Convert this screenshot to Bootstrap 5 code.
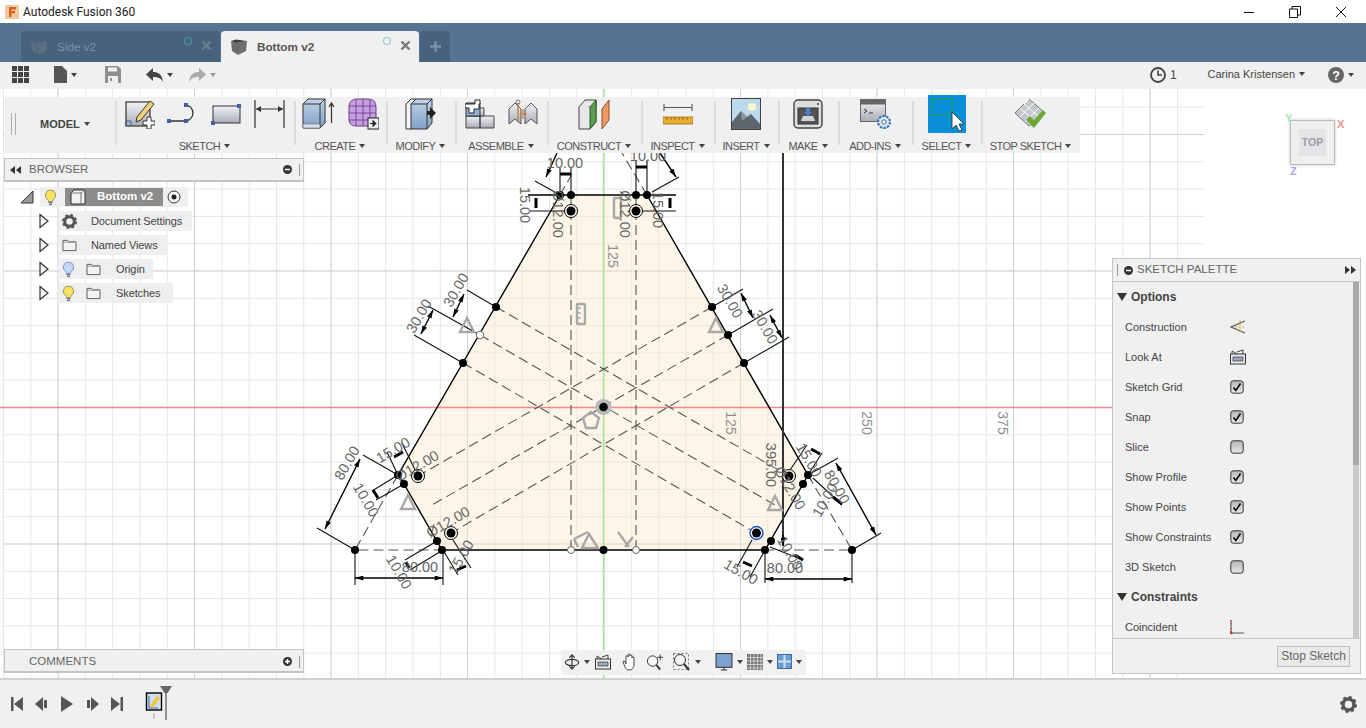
<!DOCTYPE html>
<html lang="en">
<head>
<meta charset="UTF-8">
<title>Autodesk Fusion 360</title>
<link href="https://cdn.jsdelivr.net/npm/bootstrap@5.3.2/dist/css/bootstrap.min.css" rel="stylesheet">
<style>
body { font-family: "Liberation Sans", Arial, sans-serif; font-size: 12px; color: #444; background: #fff; height: 728px; width: 1366px; }
.dropdown-toggle::after { border-top-width: 4px; border-left-width: 3.5px; border-right-width: 3.5px; margin-left: 4px; vertical-align: 2px; color: #444; }

/* title + tabs */
.title-strip { height: 23px; background: #fff; padding-left: 5px; font-family: Roboto, sans-serif; color: #222; }
.title-strip .win-name { margin-left: 4px; font-size: 12px; }
.win-btns { margin-left: auto; margin-right: 19px; gap: 34px; }
.tab-strip { height: 39px; background: #56738f; padding-left: 21px; gap: 1px; }
.doc-tab { height: 31px; width: 199px; border-radius: 4px 4px 0 0; font-size: 11.7px; }
.doc-tab .tab-ico { margin-left: 9px; }
.doc-tab .tab-name { margin-left: 9px; }
.doc-tab .tab-dot { position: absolute; top: 5px; right: 27px; }
.doc-tab .tab-x { position: absolute; top: 9px; right: 8px; }
.doc-off { background: #47627d; color: #7f93a6; }
.doc-on { background: #f0f0f0; color: #555; font-weight: 700; width: 198px; }
.doc-add { height: 31px; width: 30px; background: #47627d; border-radius: 4px 4px 0 0; }

/* app bar */
.app-strip { height: 27px; background: #f0f0f0; padding-left: 12px; padding-bottom: 2px; }
.ap-file { margin-left: 25px; }
.ap-save { margin-left: 28px; }
.ap-undo { margin-left: 25px; }
.ap-redo { margin-left: 16px; }
.ap-user { margin-left: 31px; color: #444; font-size: 11px; }
.ap-help { margin-left: 23px; margin-right: 12px; }
.ap-num { margin-left: 4px; }
.light-caret.dropdown-toggle::after { color: #999; }

/* canvas */
.stage { height: 589px; background: #fff; }
.stage-art { position: absolute; left: 0; top: 0; }
.dim-txt { font: 14.5px "Liberation Sans", sans-serif; fill: #666; text-anchor: middle; dominant-baseline: central; }
.grid-num { font: 14px "Liberation Sans", sans-serif; fill: #8f8f8f; text-anchor: middle; dominant-baseline: central; }
.ln { stroke: #000; stroke-width: 1.4; fill: none; }
.dsh { stroke: #555; stroke-width: 1.1; stroke-dasharray: 10 5; fill: none; }
.ex { stroke: #111; stroke-width: 1.1; fill: none; }
.thk { stroke: #000; stroke-width: 3; fill: none; }
.cns { stroke: #a8a8a8; stroke-width: 2.4; fill: none; }

/* toolbar */
.tool-panel { position: absolute; left: 5px; top: 8px; width: 1075px; height: 56px; background: #f0f0f0; }
.tool-grp { height: 56px; position: relative; }
.tool-grp + .tool-grp::before { content: ""; position: absolute; left: 0; top: 4px; bottom: 8px; width: 1.5px; background: #dcdcdc; }
.tool-ico { height: 34px; margin-bottom: 9px; gap: 12px; }
.tool-lbl { font-size: 11px; letter-spacing: -.5px; color: #555; line-height: 13px; white-space: nowrap; }
.grp-model { width: 110px; padding-left: 6px; padding-bottom: 2px; }
.grp-model .grip { width: 5px; height: 22px; border-left: 1px solid #aaa; border-right: 1px solid #aaa; margin-right: 24px; }
.model-lbl { font-weight: 700; font-size: 11px; color: #444; }
.w-sketch { width: 179px; } .w-create { width: 92px; } .w-modify { width: 69px; }
.w-assemble { width: 92px; } .w-construct { width: 94px; } .w-inspect { width: 73px; }
.w-insert { width: 64px; } .w-make { width: 60px; } .w-addins { width: 74px; }
.w-select { width: 69px; } .w-stop { width: 99px; }
.sel-ico { width: 38px; height: 38px; background: #0a90d8; flex-shrink: 0; }

/* side panels */
.side-panel { position: absolute; left: 4px; width: 300px; height: 24px; background: #f0f0f0; border: 1px solid #c4c4c4; border-bottom-width: 2px; font-size: 11.5px; color: #666; }
.side-panel .back-ico { margin-left: 5px; margin-right: 8px; }
.browser-head { top: 69px; }
.comments-head { top: 560px; padding-left: 24px; padding-top: 2px; }
.grip-v { width: 3px; height: 12px; border-left: 1px solid #999; margin-left: 7px; margin-right: 1px; }
.tree-box { position: absolute; left: 0; top: 96px; width: 300px; font-size: 11px; letter-spacing: -.1px; color: #444; }
.tree-row { height: 24px; }
.tree-fill { height: 20px; background: rgba(238,238,238,.92); }
.tree-arrow { width: 12px; margin-left: 38px; margin-right: 8px; }
.tr-root { margin-left: 20px; width: 14px; margin-right: 6px; }
.fill-root { width: 148px; }
.root-name { width: 98px; height: 18px; background: #8c8c8c; color: #fff; font-weight: 700; font-size: 11.5px; letter-spacing: 0; margin-left: 8px; padding-left: 5px; }
.root-text { margin-left: 11px; }
.fill-doc { width: 134px; } .fill-view { width: 110px; } .fill-org { width: 95px; } .fill-skt { width: 115px; }
.tree-lbl-a { margin-left: 14px; }
.tree-lbl-b { margin-left: 15px; }
.tree-fold { margin-left: 11px; }

/* palette */
.pal-panel { position: absolute; left: 1112px; top: 169px; width: 249px; height: 416px; background: #f0f0f0; border: 1px solid #c6c6c6; color: #444; }
.pal-head { height: 23px; border-bottom: 1px solid #c6c6c6; font-size: 11.5px; color: #666; flex-shrink: 0; }
.pal-body { height: 356px; overflow: hidden; flex-shrink: 0; }
.pal-rows { width: 240px; font-size: 11px; }
.pal-row { height: 30px; padding-left: 12px; }
.pal-row > span:first-child { width: 105px; padding-top: 1px; }
.pal-sec { height: 30px; padding-left: 4px; font-weight: 700; font-size: 12px; gap: 4px; }
.pal-scroll { width: 6px; margin-left: auto; margin-right: 1px; background: #c9c9c9; }
.pal-thumb { height: 183px; background: #a9a9a9; }
.pal-foot { height: 35px; border-top: 1px solid #c6c6c6; padding-right: 10px; }
.stop-btn { width: 73px; height: 21px; padding: 0; border-radius: 0; border: 1px solid #bdbdbd; background: #eaeaea; color: #666; font-size: 12px; line-height: 18px; }

/* nav bar + view cube */
.nav-panel { position: absolute; left: 561px; top: 561px; width: 245px; height: 25px; background: rgba(240,240,240,.92); padding-left: 3px; padding-bottom: 2px; }
.nav-panel > * { flex-shrink: 0; }
.nv-4 { margin-left: 4px; } .nv-5 { margin-left: 5px; } .nv-9 { margin-left: 9px; } .nv-10 { margin-left: 10px; } .nv-14 { margin-left: 14px; }
.cube-box { position: absolute; left: 1290px; top: 31px; width: 45px; height: 45px; background: #efefef; border: 1px solid #bbb; box-shadow: 0 0 3px rgba(0,0,0,.25); }
.cube-top { width: 27px; height: 27px; background: #e4e4e7; font-size: 10.5px; font-weight: 700; color: #9b9ba3; }
.cube-axis { position: absolute; font-size: 11px; font-weight: 700; line-height: 12px; }
.ax-x { left: 1337px; top: 29px; color: #f08f8f; }
.ax-y { left: 1285px; top: 23px; color: #a9e6a9; }
.ax-z { left: 1290px; top: 76px; color: #a6a6ee; }

/* timeline */
.time-strip { height: 50px; background: #f0f0f0; border-top: 2px solid #d0d0d0; padding-left: 10px; gap: 11px; }
.time-mark { margin-left: 10px; margin-top: -2px; }
.time-gear { margin-left: auto; margin-right: 9px; }
</style>
</head>
<body class="d-flex flex-column overflow-hidden">

<svg width="0" height="0" class="position-absolute">
  <defs>
    <linearGradient id="gBlue" x1="0" y1="0" x2="0" y2="1"><stop offset="0" stop-color="#c3d5ea"/><stop offset="1" stop-color="#7f9fc6"/></linearGradient>
    <linearGradient id="gGrey" x1="0" y1="0" x2="0" y2="1"><stop offset="0" stop-color="#f2f2f4"/><stop offset="1" stop-color="#a9adb8"/></linearGradient>
    <linearGradient id="gChk" x1="0" y1="0" x2="0" y2="1"><stop offset="0" stop-color="#b5b5b5"/><stop offset="1" stop-color="#e8e8e8"/></linearGradient>
    <marker id="arw" viewBox="0 0 10 6" refX="10" refY="3" markerWidth="9" markerHeight="5" markerUnits="userSpaceOnUse" orient="auto-start-reverse"><path d="M0 0L10 3L0 6Z" fill="#000"/></marker>
    <symbol id="bulbY" viewBox="0 0 14 18"><path d="M7 1a5.500 5.500 0 0 0-3.200 10c.7.6 1 1.400 1 2.400h4.400c0-1 .3-1.800 1-2.400A5.500 5.500 0 0 0 7 1z" fill="#f7e35e" stroke="#8f8f6a"/><path d="M5 14.500h4M5.500 16.500h3" stroke="#6a6f8c" stroke-width="1.500"/></symbol>
    <symbol id="bulbB" viewBox="0 0 14 18"><path d="M7 1a5.500 5.500 0 0 0-3.200 10c.7.6 1 1.400 1 2.400h4.400c0-1 .3-1.800 1-2.400A5.500 5.500 0 0 0 7 1z" fill="#c3d6f3" stroke="#7f8fb0"/><path d="M5 14.500h4M5.500 16.500h3" stroke="#6a6f8c" stroke-width="1.500"/></symbol>
    <symbol id="folder" viewBox="0 0 16 14"><path d="M1 12.500V1.500h5l1.500 1.500h7.500v9.500z" fill="#f4f4f4" stroke="#555"/><path d="M1 3.500h14" stroke="#999"/></symbol>
    <symbol id="treeArr" viewBox="0 0 12 16"><path d="M2 1.500L10 8L2 14.500z" fill="#f7f7f7" stroke="#333" stroke-width="1.200"/></symbol>
    <symbol id="chkOn" viewBox="0 0 14 14"><rect x=".8" y=".8" width="12.400" height="12.400" rx="2.500" fill="url(#gChk)" stroke="#333"/><path d="M3.500 7.500l2.300 3L10.500 3.500" fill="none" stroke="#000" stroke-width="1.500"/></symbol>
    <symbol id="chkOff" viewBox="0 0 14 14"><rect x=".8" y=".8" width="12.400" height="12.400" rx="2.500" fill="url(#gChk)" stroke="#333"/></symbol>
  </defs>
</svg>

<!-- window title -->
<div class="title-strip d-flex align-items-center flex-shrink-0">
  <svg width="14" height="16" viewBox="0 0 14 16"><rect x="0" y="1" width="14" height="14" rx="1" fill="#f3c9a0"/><path d="M4 3h7v2.500H6.500V7H10v2.200H6.500V13H4z" fill="#d9611e"/></svg>
  <span class="win-name">Autodesk Fusion 360</span>
  <div class="win-btns d-flex align-items-center">
    <svg width="12" height="12" viewBox="0 0 12 12"><path d="M1 6.500h10" stroke="#111"/></svg>
    <svg width="12" height="12" viewBox="0 0 12 12"><path d="M.5 3h8v8.500h-8zM3 3V.5h8.500V9H8.500" fill="none" stroke="#111"/></svg>
    <svg width="12" height="12" viewBox="0 0 12 12"><path d="M1 1l10 10M11 1L1 11" stroke="#111"/></svg>
  </div>
</div>

<!-- document tabs -->
<div class="tab-strip d-flex align-items-end flex-shrink-0">
  <div class="doc-tab doc-off position-relative d-flex align-items-center">
    <svg class="tab-ico" width="18" height="18" viewBox="0 0 18 18"><path d="M1 3l5 2 11-2-1 10-8 4-6-4z" fill="#5c6f81"/><path d="M6 5l2 12" stroke="#47627d"/></svg>
    <span class="tab-name">Side v2</span>
    <svg class="tab-dot" width="10" height="10" viewBox="0 0 10 10"><circle cx="5" cy="5" r="3.500" fill="none" stroke="#3d9c9c" stroke-width="1.200"/></svg>
    <svg class="tab-x" width="11" height="11" viewBox="0 0 11 11"><path d="M1.500 1.500l8 8M9.500 1.500l-8 8" stroke="#69808f" stroke-width="2.400"/></svg>
  </div>
  <div class="doc-tab doc-on position-relative d-flex align-items-center">
    <svg class="tab-ico" width="18" height="18" viewBox="0 0 18 18"><path d="M1 3l5 2 11-2-1 10-8 4-6-4z" fill="#6d6d6d"/><path d="M1 3l5-1.500 11 1.500-11 2z" fill="#3f3f3f"/></svg>
    <span class="tab-name">Bottom v2</span>
    <svg class="tab-dot" width="10" height="10" viewBox="0 0 10 10"><circle cx="5" cy="5" r="3.500" fill="none" stroke="#8fd0c8" stroke-width="1.200"/></svg>
    <svg class="tab-x" width="11" height="11" viewBox="0 0 11 11"><path d="M1.500 1.500l8 8M9.500 1.500l-8 8" stroke="#777" stroke-width="2.400"/></svg>
  </div>
  <div class="doc-add d-flex align-items-center justify-content-center">
    <svg width="13" height="13" viewBox="0 0 13 13"><path d="M6.500 1v11M1 6.500h11" stroke="#7890a6" stroke-width="2.400"/></svg>
  </div>
</div>

<!-- application bar -->
<div class="app-strip d-flex align-items-center flex-shrink-0">
  <svg width="17" height="17" viewBox="0 0 17 17"><path d="M0 0h5v5H0zM6 0h5v5H6zM12 0h5v5h-5zM0 6h5v5H0zM6 6h5v5H6zM12 6h5v5h-5zM0 12h5v5H0zM6 12h5v5H6zM12 12h5v5h-5z" fill="#444"/></svg>
  <span class="ap-file dropdown-toggle d-flex align-items-center"><svg width="13" height="17" viewBox="0 0 13 17"><path d="M0 0h8l5 5v12H0z" fill="#555"/></svg></span>
  <svg class="ap-save" width="16" height="17" viewBox="0 0 16 17"><path d="M0 0h13l3 3v14H0z" fill="#8f8f8f"/><path d="M3 1.500h9v4H3z" fill="#f0f0f0"/><path d="M3 10h10v7H3z" fill="#f0f0f0"/><path d="M5 12h2v3H5z" fill="#8f8f8f"/></svg>
  <span class="ap-undo dropdown-toggle d-flex align-items-center"><svg width="17" height="14" viewBox="0 0 17 14"><path d="M7 0v4c5 0 9 2 10 10-2-4-5-5-10-5v4L0 6.500z" fill="#444"/></svg></span>
  <span class="ap-redo dropdown-toggle light-caret d-flex align-items-center"><svg width="17" height="14" viewBox="0 0 17 14"><path d="M10 0v4C5 4 1 6 0 14c2-4 5-5 10-5v4l7-6.500z" fill="#aaa"/></svg></span>
  <svg class="ms-auto" width="16" height="16" viewBox="0 0 16 16"><circle cx="8" cy="8" r="7" fill="none" stroke="#444" stroke-width="1.800"/><path d="M8 3.500V8h4" fill="none" stroke="#444" stroke-width="1.600"/></svg>
  <span class="ap-num">1</span>
  <span class="ap-user dropdown-toggle">Carina Kristensen</span>
  <span class="ap-help dropdown-toggle d-flex align-items-center"><svg width="16" height="16" viewBox="0 0 16 16"><circle cx="8" cy="8" r="8" fill="#666"/><text x="8" y="12.500" text-anchor="middle" font-family="Liberation Sans" font-size="12.500" font-weight="700" fill="#fff">?</text></svg></span>
</div>

<!-- canvas -->
<main class="stage position-relative flex-shrink-0 overflow-hidden">
  <svg class="stage-art" width="1366" height="589" viewBox="0 89 1366 589">
    <defs>
      <pattern id="gMinor" patternUnits="userSpaceOnUse" x="3" y="24.800" width="27.300" height="27.300"><path d="M.5 0V27.300M0 .5H27.300" stroke="#e6e6e6" fill="none"/></pattern>
      <pattern id="gMajor" patternUnits="userSpaceOnUse" x="57.500" y="134" width="136.500" height="136.500"><path d="M.5 0V136.500M0 .5H136.500" stroke="#d2d2d2" fill="none"/></pattern>
    </defs>
    <rect x="3" y="89" width="1201" height="589" fill="url(#gMinor)"/>
    <rect x="3" y="89" width="1201" height="589" fill="url(#gMajor)"/>

    <!-- profile -->
    <path d="M560 195H647L808 475L803 484L765 550H443L404 484L398 475Z" fill="#fbe6c8" fill-opacity=".42"/>
    <path d="M0 407.500H1112" stroke="#f08a8a" stroke-width="1.500"/>
    <path d="M603.500 89V678" stroke="#a5e89a" stroke-width="1.500"/>

    <!-- construction lines -->
    <path class="dsh" d="M496 307L789 476M480 335L775 505M463 363L756 533M712 307L418 476M728 335L432 505M744 363L451 533"/>
    <path class="dsh" d="M571 195V550M636 195V550"/>
    <path class="dsh" d="M398 475L355 550L443 550M808 475L852 550L765 550"/>
    <path class="dsh" d="M560 195L572 174M647 195L622 153"/>

    <!-- outer edges -->
    <path class="ln" d="M560 195H676M528 195H560M560 195L398 475L404 484L442 550H765L803 484L808 475L647 195"/>
    <path d="M783 153V545" stroke="#333" stroke-width="2"/>
    <path d="M783 535V546" stroke="#000" stroke-width="1.500" marker-end="url(#arw)"/>

    <!-- dimensions: top -->
    <path class="ex" d="M560 195V168M571 195V168M530 211H571M636 195V160M647 195V160M636 211H676M535 181L560 195M652 192L679 177"/>
    <path class="thk" d="M560 174H571M536 198V208M636 167H647M670 198V208"/>
    <path class="ln" d="M546 177L557 153" marker-start="url(#arw)"/>
    <path class="ln" d="M676 177L660 153" marker-start="url(#arw)"/>

    <!-- dimensions: upper sides -->
    <path class="ex" d="M496 307L467 290M480 335L428 306M463 363L414 335M712 307L743 289M728 335L773 309M744 363L789 337"/>
    <path class="ln" d="M464 294L453 317" marker-start="url(#arw)" marker-end="url(#arw)"/>
    <path class="ln" d="M433 310L421 334" marker-start="url(#arw)" marker-end="url(#arw)"/>
    <path class="ln" d="M741 293L753 318" marker-start="url(#arw)" marker-end="url(#arw)"/>
    <path class="ln" d="M770 315L782 338" marker-start="url(#arw)" marker-end="url(#arw)"/>

    <!-- dimensions: lower left -->
    <path class="ex" d="M398 475L363 455M355 550L317 528M387 452L398 475M402 443L418 476M398 475L372 491M404 484L376 500M437 541L405 560M443 550L410 570M453 540L471 568M443 550L458 575M355 550V585M443 550V585"/>
    <path class="ln" d="M360 459L325 529" marker-start="url(#arw)" marker-end="url(#arw)"/>
    <path class="thk" d="M394 457L403 452M373 490L378 498M406 562L409 568M457 570L466 566"/>
    <path class="ln" d="M355 578H443" marker-start="url(#arw)" marker-end="url(#arw)"/>

    <!-- dimensions: lower right -->
    <path class="ex" d="M808 475L838 458M852 550L881 533M807 445L790 470M822 453L808 475M813 478L842 505M770 547L803 560M752 540L737 567M765 550L750 577M765 550V583M852 550V583"/>
    <path class="ln" d="M836 463L876 535" marker-start="url(#arw)" marker-end="url(#arw)"/>
    <path class="thk" d="M811 449L820 454M833 497L842 504M795 555L803 560M743 562L752 566"/>
    <path class="ln" d="M765 579H852" marker-start="url(#arw)" marker-end="url(#arw)"/>

    <!-- points -->
    <g fill="#000">
      <circle cx="560" cy="195" r="4"/><circle cx="571" cy="195" r="4"/><circle cx="636" cy="195" r="4"/><circle cx="647" cy="195" r="4"/>
      <circle cx="496" cy="307" r="4"/><circle cx="463" cy="363" r="4"/><circle cx="712" cy="307" r="4"/><circle cx="728" cy="335" r="4"/><circle cx="744" cy="363" r="4"/>
      <circle cx="398" cy="475" r="4"/><circle cx="404" cy="484" r="4"/><circle cx="437" cy="541" r="4"/><circle cx="442" cy="550" r="4"/><circle cx="355" cy="550" r="4"/>
      <circle cx="603.500" cy="550" r="4"/><circle cx="765" cy="550" r="4"/><circle cx="771" cy="541" r="4"/><circle cx="803" cy="484" r="4"/><circle cx="808" cy="475" r="4"/><circle cx="852" cy="550" r="4"/>
    </g>
    <g fill="#fff" stroke="#666"><circle cx="480" cy="335" r="3.800"/><circle cx="571" cy="550" r="3.500"/><circle cx="636" cy="550" r="3.500"/></g>
    <g fill="#fff" stroke="#000"><circle cx="571" cy="211" r="6.500"/><circle cx="636" cy="211" r="6.500"/><circle cx="418" cy="476" r="6.500"/><circle cx="451" cy="533" r="6.500"/><circle cx="789" cy="476" r="6.500"/></g>
    <circle cx="756.500" cy="533" r="6.500" fill="#fff" stroke="#1c50c8" stroke-width="1.400"/>
    <g fill="#000"><circle cx="571" cy="211" r="4.500"/><circle cx="636" cy="211" r="4.500"/><circle cx="418" cy="476" r="4.500"/><circle cx="451" cy="533" r="4.500"/><circle cx="789" cy="476" r="4.500"/><circle cx="756.500" cy="533" r="4.500"/></g>

    <!-- constraint glyphs -->
    <g class="cns">
      <path d="M460 332L467 318L474 332Z"/><path d="M709 332L716 318L723 332Z"/><path d="M401 509L408 495L415 509Z"/><path d="M768 510L775 496L782 510Z"/>
      <path d="M582 548L589 534L598 548Z"/><path d="M574 539L588 532M578 547L574 539"/>
      <path d="M618 532L629 547M625 547L633 537"/>
      <rect x="577" y="304" width="8" height="20" rx="1"/><rect x="614" y="198" width="7" height="20" rx="1"/>
      <path d="M578 308h3M578 313h3M578 318h3" stroke-width="1.400"/>
      <path d="M591 412L599 418L596 428H586L583 418Z"/>
    </g>
    <circle cx="603.500" cy="407" r="8" fill="#b9b9b9"/><circle cx="603.500" cy="407" r="4.300" fill="#000"/>

    <!-- dimension texts -->
    <text class="dim-txt" transform="translate(565 163)">10.00</text>
    <text class="dim-txt" transform="translate(648 156)">10.00</text>
    <text class="dim-txt" transform="translate(525 205) rotate(90)">15.00</text>
    <text class="dim-txt" transform="translate(658 210) rotate(90)">15.00</text>
    <text class="dim-txt" transform="translate(558 214) rotate(90)">Ø12.00</text>
    <text class="dim-txt" transform="translate(625 214) rotate(90)">Ø12.00</text>
    <text class="dim-txt" transform="translate(456 290) rotate(-60)">30.00</text>
    <text class="dim-txt" transform="translate(419 316) rotate(-60)">30.00</text>
    <text class="dim-txt" transform="translate(730 301) rotate(60)">30.00</text>
    <text class="dim-txt" transform="translate(765 327) rotate(60)">30.00</text>
    <text class="dim-txt" transform="translate(771 465) rotate(90)">395.00</text>
    <text class="dim-txt" transform="translate(393 450) rotate(-30)">15.00</text>
    <text class="dim-txt" transform="translate(417 466) rotate(-30)">Ø12.00</text>
    <text class="dim-txt" transform="translate(347 463) rotate(-60)">80.00</text>
    <text class="dim-txt" transform="translate(366 500) rotate(60)">10.00</text>
    <text class="dim-txt" transform="translate(448 522) rotate(-30)">Ø12.00</text>
    <text class="dim-txt" transform="translate(399 572) rotate(60)">10.00</text>
    <text class="dim-txt" transform="translate(420 567)">80.00</text>
    <text class="dim-txt" transform="translate(461 557) rotate(-60)">15.00</text>
    <text class="dim-txt" transform="translate(741 572) rotate(30)">15.00</text>
    <text class="dim-txt" transform="translate(785 568)">80.00</text>
    <text class="dim-txt" transform="translate(790 553) rotate(60)">10.00</text>
    <text class="dim-txt" transform="translate(809 460) rotate(60)">15.00</text>
    <text class="dim-txt" transform="translate(790 488) rotate(60)">Ø12.00</text>
    <text class="dim-txt" transform="translate(837 487) rotate(60)">80.00</text>
    <text class="dim-txt" transform="translate(825 500) rotate(-60)">10.00</text>
    <text class="grid-num" transform="translate(613 256) rotate(90)">125</text>
    <text class="grid-num" transform="translate(731 423) rotate(90)">125</text>
    <text class="grid-num" transform="translate(867 423) rotate(90)">250</text>
    <text class="grid-num" transform="translate(1003 423) rotate(90)">375</text>
  </svg>

  <!-- ribbon -->
  <div class="tool-panel d-flex">
    <div class="tool-grp grp-model d-flex align-items-center">
      <span class="grip"></span>
      <span class="model-lbl dropdown-toggle">MODEL</span>
    </div>
    <div class="tool-grp w-sketch d-flex flex-column align-items-center">
      <div class="tool-ico d-flex align-items-center">
        <svg width="30" height="30" viewBox="0 0 30 30"><rect x="1" y="3" width="24" height="24" fill="url(#gGrey)" stroke="#333" stroke-width="1.200"/><path d="M1 27V22M1 22h5v5" fill="none" stroke="#3f5fa8"/><path d="M12 18L25 2l4 3-13 16-5 2z" fill="#f4d078" stroke="#333"/><path d="M22 18h4v4h4v4h-4v4h-4v-4h-4v-4h4z" fill="#fff" stroke="#333"/></svg>
        <svg width="32" height="24" viewBox="0 0 32 24"><path d="M3 19H18A8 8 0 0 0 18 3" fill="none" stroke="#333" stroke-width="1.300"/><g fill="#3f5fa8"><rect x="0" y="17" width="4" height="4"/><rect x="17" y="17" width="4" height="4"/><rect x="17" y="1" width="4" height="4"/></g></svg>
        <svg width="31" height="24" viewBox="0 0 31 24"><rect x="2" y="4" width="27" height="17" fill="url(#gGrey)" stroke="#333"/><rect x="0" y="19" width="4" height="4" fill="#3f5fa8"/><rect x="26" y="2" width="4" height="4" fill="#3f5fa8"/></svg>
        <svg width="31" height="30" viewBox="0 0 31 30"><path d="M1 1V29M30 1V29" stroke="#333" stroke-width="1.200"/><path d="M2 10H29" stroke="#333"/><path d="M2 10l5-3v6zM29 10l-5-3v6z" fill="#333"/></svg>
      </div>
      <span class="tool-lbl dropdown-toggle">SKETCH</span>
    </div>
    <div class="tool-grp w-create d-flex flex-column align-items-center">
      <div class="tool-ico d-flex align-items-center">
        <svg width="34" height="32" viewBox="0 0 34 32"><path d="M1 6l5-5h17v24l-5 5H1z" fill="url(#gBlue)" stroke="#333"/><path d="M1 6h17l5-5M18 6v24" fill="none" stroke="#333"/><path d="M1 26h17v4H1z" fill="#d5e0ee" stroke="#666" stroke-width=".6"/><path d="M29.500 25V6M27 9l2.500-4 2.500 4" fill="none" stroke="#333" stroke-width="1.200"/></svg>
        <svg width="31" height="32" viewBox="0 0 31 32"><path d="M1 8q1-7 8-7h11q8 0 8 8v13q0 6-7 6H8q-7 0-7-7z" fill="#c79ee0" stroke="#6a3f8a"/><path d="M8 2v26M15 1v27M22 2v26M1 8h27M1 15h27M1 22h27" stroke="#6a3f8a" stroke-width=".9"/><rect x="20" y="20" width="11" height="11" fill="#eee" stroke="#222"/><path d="M22 25.500h5M25 22.500l3 3-3 3z" fill="#222" stroke="#222"/></svg>
      </div>
      <span class="tool-lbl dropdown-toggle">CREATE</span>
    </div>
    <div class="tool-grp w-modify d-flex flex-column align-items-center">
      <div class="tool-ico d-flex align-items-center">
        <svg width="31" height="32" viewBox="0 0 31 32"><path d="M1 6l5-5h5v27l-5 3H1z" fill="#f4f4f4" stroke="#333"/><path d="M6 6l5-5h16v24l-5 6H6z" fill="url(#gBlue)" stroke="#333"/><path d="M6 6h16l5-5M22 6v25" fill="none" stroke="#333"/><path d="M22 13h3V9l6 6-6 6v-4h-3z" fill="#222"/></svg>
      </div>
      <span class="tool-lbl dropdown-toggle">MODIFY</span>
    </div>
    <div class="tool-grp w-assemble d-flex flex-column align-items-center">
      <div class="tool-ico d-flex align-items-center">
        <svg width="31" height="30" viewBox="0 0 31 30"><path d="M1 17h14v12H1zM15 17h14v12H15z" fill="url(#gGrey)" stroke="#444"/><path d="M5 9h14v8H5z" fill="url(#gGrey)" stroke="#444"/><path d="M1 4h14v13H1z" fill="#8fb0d8" stroke="#333"/><path d="M4 5h6V1h5v4h-1v5H9v4H4V9H0V5z" fill="#fff" stroke="#222"/></svg>
        <svg width="30" height="30" viewBox="0 0 30 30"><path d="M1 25V10l6-6 6 6v15L7 20z" fill="url(#gGrey)" stroke="#555"/><path d="M17 25V10l6-6 6 6v15l-6-5z" fill="url(#gGrey)" stroke="#555"/><path d="M10 4v18M13 15h6M15 10v10" stroke="#c9702a" stroke-width="1.200" fill="none"/><circle cx="10" cy="3" r="2" fill="none" stroke="#777"/></svg>
      </div>
      <span class="tool-lbl dropdown-toggle">ASSEMBLE</span>
    </div>
    <div class="tool-grp w-construct d-flex flex-column align-items-center">
      <div class="tool-ico d-flex align-items-center">
        <svg width="32" height="32" viewBox="0 0 32 32"><path d="M1 9l6-7h11v22l-6 7H1z" fill="#e8e8e8" stroke="#444"/><path d="M11 9h7v-7" fill="none" stroke="#444"/><path d="M12 9l6-7v22l-6 7z" fill="#5b9e4d" stroke="#2f5e2a"/><path d="M24 11l7-9v20l-7 9z" fill="#ee9a63" stroke="#8f4d1f"/></svg>
      </div>
      <span class="tool-lbl dropdown-toggle">CONSTRUCT</span>
    </div>
    <div class="tool-grp w-inspect d-flex flex-column align-items-center">
      <div class="tool-ico d-flex align-items-center">
        <svg width="30" height="22" viewBox="0 0 30 22"><path d="M1 1v7M29 1v7M1 4.500H29" stroke="#555" stroke-width="1.100"/><rect x="0" y="14" width="30" height="7" fill="#e7ad2f" stroke="#9a7417" stroke-width=".8"/><path d="M4 14v3M8 14v3M12 14v3M16 14v3M20 14v3M24 14v3" stroke="#8a6610" stroke-width=".8"/></svg>
      </div>
      <span class="tool-lbl dropdown-toggle">INSPECT</span>
    </div>
    <div class="tool-grp w-insert d-flex flex-column align-items-center">
      <div class="tool-ico d-flex align-items-center">
        <svg width="30" height="32" viewBox="0 0 30 32"><rect x=".5" y=".5" width="29" height="31" fill="#bcd9ec" stroke="#444"/><circle cx="21" cy="9" r="4" fill="#fbf5c6"/><path d="M1 31V24L10 13l6 6 4-3 9 10v5z" fill="#5e656e"/><path d="M10 13l6 6-5 4z" fill="#8d949c"/></svg>
      </div>
      <span class="tool-lbl dropdown-toggle">INSERT</span>
    </div>
    <div class="tool-grp w-make d-flex flex-column align-items-center">
      <div class="tool-ico d-flex align-items-center">
        <svg width="30" height="30" viewBox="0 0 30 30"><rect x="1" y="1" width="28" height="28" rx="4" fill="#dedede" stroke="#444" stroke-width="1.400"/><rect x="5" y="9" width="20" height="16" fill="#555" stroke="#333"/><path d="M8 22h14l-2-5H10z" fill="#cfd4da"/><path d="M13 9h4v4h2l-4 4-4-4h2z" fill="#4a7fc1"/><circle cx="25" cy="5" r="1" fill="#333"/></svg>
      </div>
      <span class="tool-lbl dropdown-toggle">MAKE</span>
    </div>
    <div class="tool-grp w-addins d-flex flex-column align-items-center">
      <div class="tool-ico d-flex align-items-center">
        <svg width="31" height="30" viewBox="0 0 31 30"><rect x=".5" y=".5" width="25" height="22" fill="url(#gGrey)" stroke="#666"/><rect x=".5" y=".5" width="25" height="5" fill="#666"/><path d="M4 10l3 2-3 2M9 14h4" fill="none" stroke="#333"/><circle cx="24" cy="23" r="6" fill="#dbe6f3" stroke="#3c6ca8" stroke-width="2" stroke-dasharray="2.500 1.200"/><circle cx="24" cy="23" r="2.200" fill="#fff" stroke="#3c6ca8"/></svg>
      </div>
      <span class="tool-lbl dropdown-toggle">ADD-INS</span>
    </div>
    <div class="tool-grp w-select d-flex flex-column align-items-center">
      <div class="tool-ico d-flex align-items-center">
        <div class="sel-ico"><svg class="d-block" width="38" height="38" viewBox="0 0 38 38"><rect x="4" y="4" width="20" height="16" fill="none" stroke="#1f9a6a" stroke-width="1.300"/><path d="M24 17v17l4-4 3 6 3-1-3-6h5z" fill="#fff" stroke="#333" stroke-width=".9"/></svg></div>
      </div>
      <span class="tool-lbl dropdown-toggle">SELECT</span>
    </div>
    <div class="tool-grp w-stop d-flex flex-column align-items-center">
      <div class="tool-ico d-flex align-items-center">
        <svg width="32" height="30" viewBox="0 0 32 30"><path d="M0 14L14 0l15 13-15 14z" fill="#c4c7cc" stroke="#777"/><path d="M5 9l15 13M9 5l15 13M14 0l-5 5M19 4L5 18M24 9L10 23" stroke="#fff" stroke-width="1"/><path d="M11 21l4-4 4 4 9-10 3 3-12 15z" fill="#6ea832"/></svg>
      </div>
      <span class="tool-lbl dropdown-toggle">STOP SKETCH</span>
    </div>
  </div>

  <!-- browser -->
  <div class="side-panel browser-head d-flex align-items-center">
    <svg class="back-ico" width="11" height="8" viewBox="0 0 11 8"><path d="M5 0v8L0 4zM11 0v8L6 4z" fill="#333"/></svg>
    <span>BROWSER</span>
    <svg class="ms-auto" width="9" height="9" viewBox="0 0 9 9"><circle cx="4.500" cy="4.500" r="4.500" fill="#333"/><path d="M2 4.500h5" stroke="#fff" stroke-width="1.500"/></svg>
    <span class="grip-v"></span>
  </div>
  <div class="tree-box">
    <div class="tree-row d-flex align-items-center">
      <svg class="tr-root" width="14" height="14" viewBox="0 0 14 14"><path d="M1 13L13 1v12z" fill="#999" stroke="#333"/></svg>
      <div class="tree-fill fill-root d-flex align-items-center">
        <svg class="ms-1" width="13" height="17" viewBox="0 0 14 18"><use href="#bulbY"/></svg>
        <div class="root-name d-flex align-items-center"><svg width="16" height="16" viewBox="0 0 16 16"><path d="M1 4l3-3h11v14H1z" fill="#f2f2f2" stroke="#333"/><path d="M1 4h10l4-3M11 4v11" fill="none" stroke="#777"/></svg><span class="root-text">Bottom v2</span></div>
        <svg class="ms-1" width="14" height="14" viewBox="0 0 14 14"><circle cx="7" cy="7" r="6" fill="#f8f8f8" stroke="#333"/><circle cx="7" cy="7" r="2.500" fill="#222"/></svg>
      </div>
    </div>
    <div class="tree-row d-flex align-items-center">
      <svg class="tree-arrow" width="12" height="16"><use href="#treeArr"/></svg>
      <div class="tree-fill fill-doc d-flex align-items-center ps-1">
        <svg width="15" height="15" viewBox="0 0 15 15"><circle cx="7.500" cy="7.500" r="4.800" fill="none" stroke="#555" stroke-width="3"/><circle cx="7.500" cy="7.500" r="6.300" fill="none" stroke="#555" stroke-width="2.400" stroke-dasharray="2.600 2.350"/></svg>
        <span class="tree-lbl-a">Document Settings</span>
      </div>
    </div>
    <div class="tree-row d-flex align-items-center">
      <svg class="tree-arrow" width="12" height="16"><use href="#treeArr"/></svg>
      <div class="tree-fill fill-view d-flex align-items-center ps-1">
        <svg width="15" height="13"><use href="#folder"/></svg>
        <span class="tree-lbl-a">Named Views</span>
      </div>
    </div>
    <div class="tree-row d-flex align-items-center">
      <svg class="tree-arrow" width="12" height="16"><use href="#treeArr"/></svg>
      <div class="tree-fill fill-org d-flex align-items-center ps-1">
        <svg width="13" height="17" viewBox="0 0 14 18"><use href="#bulbB"/></svg>
        <svg class="tree-fold" width="15" height="13"><use href="#folder"/></svg>
        <span class="tree-lbl-b">Origin</span>
      </div>
    </div>
    <div class="tree-row d-flex align-items-center">
      <svg class="tree-arrow" width="12" height="16"><use href="#treeArr"/></svg>
      <div class="tree-fill fill-skt d-flex align-items-center ps-1">
        <svg width="13" height="17" viewBox="0 0 14 18"><use href="#bulbY"/></svg>
        <svg class="tree-fold" width="15" height="13"><use href="#folder"/></svg>
        <span class="tree-lbl-b">Sketches</span>
      </div>
    </div>
  </div>

  <!-- comments -->
  <div class="side-panel comments-head d-flex align-items-center">
    <span>COMMENTS</span>
    <svg class="ms-auto" width="9" height="9" viewBox="0 0 9 9"><circle cx="4.500" cy="4.500" r="4.500" fill="#333"/><path d="M2 4.500h5M4.500 2v5" stroke="#fff" stroke-width="1.500"/></svg>
    <span class="grip-v"></span>
  </div>

  <!-- palette -->
  <aside class="pal-panel d-flex flex-column">
    <div class="pal-head d-flex align-items-center">
      <span class="grip-v ms-1 me-1"></span>
      <svg width="9" height="9" viewBox="0 0 9 9"><circle cx="4.500" cy="4.500" r="4.500" fill="#333"/><path d="M2 4.500h5" stroke="#fff" stroke-width="1.500"/></svg>
      <span class="ms-1">SKETCH PALETTE</span>
      <svg class="ms-auto me-1" width="11" height="8" viewBox="0 0 11 8"><path d="M0 0v8l5-4zM6 0v8l5-4z" fill="#333"/></svg>
    </div>
    <div class="pal-body d-flex">
      <div class="pal-rows">
        <div class="pal-sec d-flex align-items-center"><svg width="10" height="8" viewBox="0 0 10 8"><path d="M0 0h10L5 8z" fill="#333"/></svg><span>Options</span></div>
        <div class="pal-row d-flex align-items-center"><span>Construction</span><svg width="16" height="16" viewBox="0 0 16 16"><path d="M15 2L1 8l14 6" fill="none" stroke="#555" stroke-width="1.100"/><path d="M10 1v14M5 8h10" stroke="#e0a42a" stroke-dasharray="2 1.500" fill="none"/></svg></div>
        <div class="pal-row d-flex align-items-center"><span>Look At</span><svg width="16" height="16" viewBox="0 0 16 16"><rect x=".5" y="5" width="15" height="10" fill="#eee" stroke="#333"/><rect x="3" y="8" width="10" height="4" fill="#9aa8bf" stroke="#333" stroke-width=".7"/><path d="M2 5V2l5 3M7 3l6-2v4" fill="none" stroke="#333" stroke-width=".9"/></svg></div>
        <div class="pal-row d-flex align-items-center"><span>Sketch Grid</span><svg width="14" height="14"><use href="#chkOn"/></svg></div>
        <div class="pal-row d-flex align-items-center"><span>Snap</span><svg width="14" height="14"><use href="#chkOn"/></svg></div>
        <div class="pal-row d-flex align-items-center"><span>Slice</span><svg width="14" height="14"><use href="#chkOff"/></svg></div>
        <div class="pal-row d-flex align-items-center"><span>Show Profile</span><svg width="14" height="14"><use href="#chkOn"/></svg></div>
        <div class="pal-row d-flex align-items-center"><span>Show Points</span><svg width="14" height="14"><use href="#chkOn"/></svg></div>
        <div class="pal-row d-flex align-items-center"><span>Show Constraints</span><svg width="14" height="14"><use href="#chkOn"/></svg></div>
        <div class="pal-row d-flex align-items-center"><span>3D Sketch</span><svg width="14" height="14"><use href="#chkOff"/></svg></div>
        <div class="pal-sec d-flex align-items-center"><svg width="10" height="8" viewBox="0 0 10 8"><path d="M0 0h10L5 8z" fill="#333"/></svg><span>Constraints</span></div>
        <div class="pal-row d-flex align-items-center"><span>Coincident</span><svg width="14" height="16" viewBox="0 0 14 16"><path d="M1 1v13h13" fill="none" stroke="#555"/><path d="M1 1v5M1 9v5" stroke="#b13a3a" stroke-width="1.200" stroke-dasharray="1.500 1.500"/><circle cx="1.200" cy="14" r="1.400" fill="#b13a3a"/></svg></div>
      </div>
      <div class="pal-scroll"><div class="pal-thumb"></div></div>
    </div>
    <div class="pal-foot d-flex align-items-center justify-content-end">
      <button type="button" class="btn stop-btn">Stop Sketch</button>
    </div>
  </aside>

  <!-- view cube -->
  <div class="cube-box d-flex align-items-center justify-content-center"><div class="cube-top d-flex align-items-center justify-content-center">TOP</div></div>
  <span class="cube-axis ax-x">X</span><span class="cube-axis ax-y">Y</span><span class="cube-axis ax-z">Z</span>

  <!-- navigation bar -->
  <div class="nav-panel d-flex align-items-center">
    <span class="dropdown-toggle d-flex align-items-center"><svg width="16" height="18" viewBox="0 0 18 18"><path d="M9 1v16M6 4l3-3 3 3M6 14l3 3 3-3" fill="none" stroke="#333" stroke-width="1.300"/><ellipse cx="9" cy="9.500" rx="7.500" ry="3.500" fill="none" stroke="#333" stroke-width="1.300"/></svg></span>
    <svg class="nv-5" width="16" height="16" viewBox="0 0 16 16"><rect x=".5" y="5" width="15" height="10" fill="#eee" stroke="#333"/><rect x="3" y="8" width="10" height="4" fill="#9aa8bf" stroke="#333" stroke-width=".7"/><path d="M2 5V2l5 3M7 3l6-2v4" fill="none" stroke="#333" stroke-width=".9"/></svg>
    <svg class="nv-10" width="16" height="18" viewBox="0 0 16 18"><path d="M5 11V4q0-1.500 1-1.500T7 4V2q0-1 1-1t1 1v1q0-1 1-1t1 1v2q0-1 1-1t1 1v6c0 4-2 6-5 6-2 0-3-1-4-3L2 9q0-1 1-1t2 3z" fill="#fff" stroke="#333" stroke-width=".9"/></svg>
    <svg class="nv-9" width="17" height="18" viewBox="0 0 18 18"><circle cx="7" cy="8" r="5.500" fill="#f4f4f4" stroke="#333"/><path d="M11 12l4 5" stroke="#333" stroke-width="2"/><path d="M15 1v6M12 4h6" stroke="#333"/></svg>
    <span class="dropdown-toggle d-flex align-items-center nv-10"><svg width="18" height="18" viewBox="0 0 18 18"><rect x=".5" y=".5" width="15" height="16" fill="none" stroke="#777" stroke-dasharray="2 2"/><circle cx="7" cy="7" r="5.500" fill="#f4f4f4" stroke="#333"/><path d="M11 11l5 6" stroke="#333" stroke-width="2"/></svg></span>
    <span class="dropdown-toggle d-flex align-items-center nv-14"><svg width="18" height="18" viewBox="0 0 16 17"><rect x=".5" y=".5" width="15" height="13" fill="#7da3d0" stroke="#333"/><path d="M5 16h6M8 14v2" stroke="#333"/></svg></span>
    <span class="dropdown-toggle d-flex align-items-center nv-4"><svg width="16" height="16" viewBox="0 0 16 16"><rect width="16" height="16" fill="#777"/><path d="M3.500 0v16M7 0v16M10.500 0v16M14 0v16M0 3.500h16M0 7h16M0 10.500h16M0 14h16" stroke="#ddd" stroke-width=".8"/></svg></span>
    <span class="dropdown-toggle d-flex align-items-center nv-4"><svg width="15" height="15" viewBox="0 0 15 15"><rect x=".5" y=".5" width="14" height="14" fill="#cfe0f2" stroke="#3a6ca8"/><path d="M1 1h5.500v5.500H1zM8.500 1H14v5.500H8.500zM1 8.500h5.500V14H1zM8.500 8.500H14V14H8.500z" fill="#6f9cd0"/></svg></span>
  </div>
</main>

<!-- timeline -->
<div class="time-strip d-flex align-items-center flex-shrink-0">
  <svg width="14" height="14" viewBox="0 0 14 14"><path d="M1 0h2.500v14H1zM13 0v14L4 7z" fill="#555"/></svg>
  <svg width="14" height="14" viewBox="0 0 14 14"><path d="M8 0v14L0 7zM9 3h3v8H9z" fill="#555"/></svg>
  <svg width="14" height="16" viewBox="0 0 14 16"><path d="M1 0v16l12-8z" fill="#555"/></svg>
  <svg width="14" height="14" viewBox="0 0 14 14"><path d="M6 0v14l8-7zM2 3h3v8H2z" fill="#555"/></svg>
  <svg width="14" height="14" viewBox="0 0 14 14"><path d="M1 0v14l9-7zM10.500 0H13v14h-2.500z" fill="#555"/></svg>
  <svg class="time-mark" width="27" height="34" viewBox="0 0 27 34"><rect x="1.500" y="7" width="15" height="17" fill="#cfdff0" stroke="#000" stroke-width="1.400"/><path d="M4 10v12h9" fill="none" stroke="#3f5fa8"/><path d="M5 20l7-10 3 2-7 10z" fill="#f2c53a"/><path d="M9 27v6" stroke="#bbb" stroke-width="1.400"/><path d="M15 0h12l-4.500 7h-3z" fill="#666"/><path d="M21 6v28" stroke="#666" stroke-width="1.400"/></svg>
  <svg class="time-gear" width="17" height="17" viewBox="0 0 15 15"><circle cx="7.500" cy="7.500" r="4.800" fill="none" stroke="#555" stroke-width="3"/><circle cx="7.500" cy="7.500" r="6.300" fill="none" stroke="#555" stroke-width="2.400" stroke-dasharray="2.600 2.350"/></svg>
</div>

<script src="https://cdn.jsdelivr.net/npm/bootstrap@5.3.2/dist/js/bootstrap.bundle.min.js"></script>
</body>
</html>
